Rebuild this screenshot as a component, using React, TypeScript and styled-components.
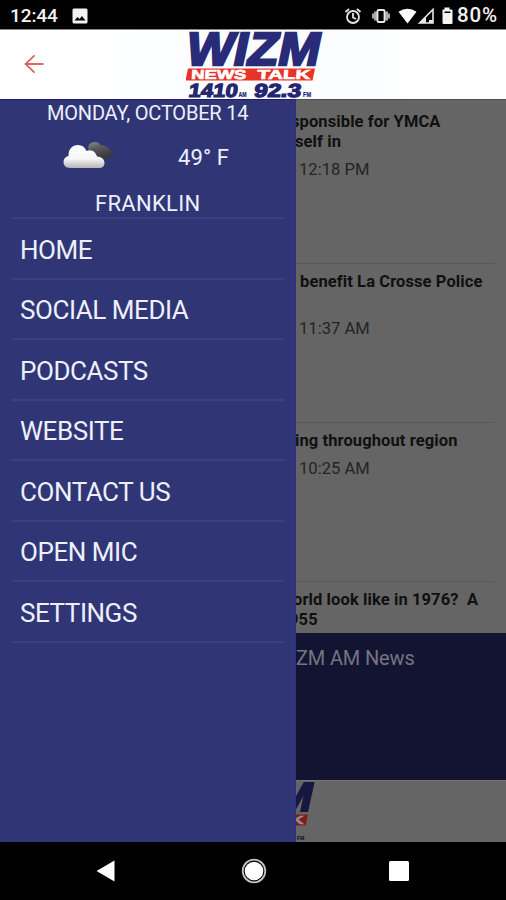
import React from "react";
import styled, { createGlobalStyle } from "styled-components";

const GlobalStyle = createGlobalStyle`
  * { box-sizing: border-box; }
  body { margin: 0; background: #000; font-family: Roboto, "Liberation Sans", sans-serif; }
`;

const Screen = styled.div`
  width: 506px;
  height: 900px;
  display: flex;
  flex-direction: column;
  overflow: hidden;
  background: #000;
`;

const StatusBar = styled.div`
  height: 29px;
  flex: none;
  display: flex;
  align-items: center;
  justify-content: space-between;
  padding: 2px 8px 0 10px;
  color: #f2f2f2;
  font-size: 19px;
  font-weight: 500;
  line-height: 27px;
`;

const StatusGroup = styled.div<{ $gap: number }>`
  display: flex;
  align-items: center;
  gap: ${(p) => p.$gap}px;
`;

const StatusText = styled.span<{ $spacing: number; $size?: number }>`
  letter-spacing: ${(p) => p.$spacing}px;
  font-size: ${(p) => p.$size ?? 19}px;
  white-space: nowrap;
`;

const StatusIcon = styled.svg`
  display: block;
  flex: none;
`;

const Header = styled.header`
  height: 70px;
  flex: none;
  display: grid;
  grid-template-columns: 186px 138px 1fr;
  background: linear-gradient(90deg, #fff 100px, #fbfdff 190px, #fbfdff 380px, #fff 410px);
  border-top: 1px solid #858585;
`;

const BackButton = styled.button`
  width: 70px;
  height: 69px;
  padding: 0 0 1px 24px;
  border: 0;
  background: none;
  display: flex;
  align-items: center;
`;

const LogoArt = styled.svg`
  display: block;
  font-family: "Liberation Sans", sans-serif;
  font-weight: 700;
`;

const Body = styled.div`
  height: 743px;
  flex: none;
  display: flex;
`;

const Drawer = styled.nav`
  width: 296px;
  flex: none;
  background: #303675;
  border-top: 1px solid #201e6a;
  border-right: 1px solid #29308a;
  color: #edf0fb;
  padding: 0 11px 0 12px;
`;

const Weather = styled.section`
  height: 119px;
  display: flex;
  flex-direction: column;
  border-bottom: 2px solid #3a4080;
  font-size: 22px;
`;

const DateLine = styled.div`
  height: 29px;
  line-height: 26px;
  padding-left: 35px;
  font-size: 20px;
  letter-spacing: -0.2px;
  white-space: nowrap;
`;

const Conditions = styled.div`
  height: 57px;
  display: flex;
  align-items: center;
`;

const CloudSlot = styled.div`
  width: 166px;
  padding: 0 0 6px 51px;
`;

const CloudArt = styled.svg`
  display: block;
`;

const Temperature = styled.span`
  letter-spacing: 0.1px;
`;

const City = styled.div`
  padding-left: 83px;
  line-height: 35px;
  height: 31px;
  letter-spacing: 0.3px;
`;

const MenuItem = styled.a`
  height: 60.5px;
  display: flex;
  align-items: center;
  padding: 2.5px 0 0 8px;
  border-bottom: 2px solid #3a4080;
  font-size: 26px;
  letter-spacing: -0.45px;
  white-space: nowrap;
`;

const Feed = styled.main`
  width: 210px;
  display: flex;
  flex-direction: column;
  overflow: hidden;
  background: #656565;
  border-top: 1px solid #4e4e4e;
`;

const Story = styled.article<{ $height: number; $top?: number }>`
  height: ${(p) => p.$height}px;
  flex: none;
  width: 199px;
  padding-top: ${(p) => p.$top ?? 8}px;
  border-bottom: 1px solid #595959;
  overflow: hidden;
`;

const Headline = styled.h2<{ $shift: number }>`
  margin: 0 0 0 ${(p) => p.$shift}px;
  font-size: 16.5px;
  line-height: 20px;
  font-weight: 700;
  letter-spacing: 0.1px;
  color: #101010;
  white-space: pre;
`;

const StoryTime = styled.div<{ $top: number }>`
  margin: ${(p) => p.$top}px 0 0 3px;
  font-size: 16.6px;
  line-height: 20px;
  color: #242424;
`;

const LastStory = styled(Story)`
  border-bottom: 0;
`;

const Station = styled.section`
  height: 147px;
  flex: none;
  background: #131431;
  color: #747582;
  font-size: 20px;
  line-height: 24px;
  letter-spacing: -0.15px;
  padding-top: 13px;
  white-space: nowrap;
`;

const Sponsor = styled.footer`
  flex: 1;
  overflow: hidden;
  border-top: 1px solid #747474;
`;

const SponsorLogo = styled.div`
  margin: -1px 0 0 -104px;
  filter: brightness(0.55);
`;

const NavBar = styled.div`
  height: 58px;
  flex: none;
  display: grid;
  grid-template-columns: 180px 146px 146px;
  padding-left: 34px;
  align-items: center;
`;

const NavButton = styled.button<{ $indent: number }>`
  height: 58px;
  border: 0;
  background: none;
  padding: 0 0 0 ${(p) => p.$indent}px;
  display: flex;
  align-items: center;
`;

function Logo({ width = 138 }: { width?: number }) {
  return (
    <LogoArt width={width} height={width / 2} viewBox="186 30 138 69">
      <text x="187" y="65" fontSize="46" fontStyle="italic" textLength="133" lengthAdjust="spacingAndGlyphs" fill="#282b78" stroke="#282b78" strokeWidth="2.4">WIZM</text>
      <path d="M188 68.500H315L312.500 80.500H185.500Z" fill="#ea3327" />
      <g fill="#fff" stroke="#fff" strokeWidth=".7">
        <text transform="translate(191 79.200) skewX(-4)" fontSize="13" textLength="55" lengthAdjust="spacingAndGlyphs">NEWS</text>
        <text transform="translate(257 79.200) skewX(-4)" fontSize="13" textLength="53" lengthAdjust="spacingAndGlyphs">TALK</text>
      </g>
      <g fill="#24266f" stroke="#24266f">
        <text transform="translate(188 96.700) skewX(-8)" fontSize="19" textLength="49" lengthAdjust="spacingAndGlyphs" strokeWidth="1.200">1410</text>
        <text x="238.500" y="96.800" fontSize="6.500" textLength="8" lengthAdjust="spacingAndGlyphs" strokeWidth=".2">AM</text>
        <text transform="translate(253.500 96.700) skewX(-8)" fontSize="19" textLength="47" lengthAdjust="spacingAndGlyphs" strokeWidth="1.200">92.3</text>
        <text x="303" y="96.800" fontSize="6.500" textLength="8" lengthAdjust="spacingAndGlyphs" strokeWidth=".2">FM</text>
      </g>
    </LogoArt>
  );
}

function CloudIcon() {
  return (
    <CloudArt width="53" height="28" viewBox="63 140 53 28">
      <defs>
        <linearGradient id="front" x1="0" y1="0" x2="0" y2="1">
          <stop offset="0" stopColor="#fff" />
          <stop offset=".6" stopColor="#f6f6f6" />
          <stop offset="1" stopColor="#b5b5b5" />
        </linearGradient>
        <linearGradient id="back" x1="0" y1="0" x2=".4" y2="1">
          <stop offset="0" stopColor="#8b8b8d" />
          <stop offset=".45" stopColor="#58585b" />
          <stop offset="1" stopColor="#38383b" />
        </linearGradient>
      </defs>
      <path d="M88 148C88 143 91 141 95 141C98 141 99.500 142.500 101 144.500C106 144 109 147 110 150C112 151 114 153 114.500 154C112 156.500 109 157.500 103 157.500L91 153Z" fill="url(#back)" />
      <path d="M70 167C65.500 167 63.500 164 63.500 161C63.500 158 65.500 155.500 68.500 155C68.500 148 72 144 78 144C82 144 85 146 86.500 150C91 147.500 96 151 97 155.500C102 156 104.500 158.500 104.500 162C104.500 165 102.500 167 99 167Z" fill="url(#front)" />
    </CloudArt>
  );
}

const menu = ["HOME", "SOCIAL MEDIA", "PODCASTS", "WEBSITE", "CONTACT US", "OPEN MIC", "SETTINGS"];

export default function App() {
  return (
    <>
      <GlobalStyle />
      <Screen>
        <StatusBar>
          <StatusGroup $gap={14}>
            <StatusText $spacing={-0.1}>12:44</StatusText>
            <StatusIcon width="16" height="16" viewBox="0 0 16 16">
              <path fillRule="evenodd" d="M2 .5H14Q15.500 .5 15.500 2V14Q15.500 15.500 14 15.500H2Q.5 15.500 .5 14V2Q.5 .5 2 .5ZM2.500 12.500H13.500L10 8L7.500 11L5.500 9Z" fill="#f2f2f2" />
            </StatusIcon>
          </StatusGroup>
          <StatusGroup $gap={2}>
            <StatusIcon width="113" height="20" viewBox="341 5 113 20">
              <g fill="none" stroke="#e5e5e5" strokeWidth="1.800">
                <circle cx="352" cy="16" r="6" />
                <path d="M344.500 11L348 8M356 8L359.500 11M352 12V16.500L355 18" />
              </g>
              <path d="M373 10.500H376V19.500H373ZM384 10.500H387V19.500H384ZM371 12.500H373V17.500H371ZM387 12.500H389V17.500H387Z" fill="#a8a8a8" />
              <rect x="376.500" y="9" width="7" height="12" rx="1" fill="none" stroke="#e5e5e5" strokeWidth="1.800" />
              <path d="M397.500 10.800Q406.500 4.500 415.500 10.800L406.500 22.500Z" fill="#fff" />
              <path d="M418.500 22L432 8.500V22Z" fill="none" stroke="#e5e5e5" strokeWidth="1.600" />
              <path d="M425 15.500V22H418.500ZM428 19H432V22H428Z" fill="#e5e5e5" />
              <path fillRule="evenodd" d="M441.500 8.500H443.500V6.500H448.500V8.500H450.500Q451.500 8.500 451.500 9.500V22Q451.500 23 450.500 23H442.500Q441.500 23 441.500 22ZM443.500 10.500V12H449.500V10.500Z" fill="#f5f5f5" />
            </StatusIcon>
            <StatusText $spacing={0.9} $size={20.5}>80%</StatusText>
          </StatusGroup>
        </StatusBar>

        <Header>
          <BackButton aria-label="Back">
            <svg width="20" height="20" viewBox="0 0 20 20" fill="none" stroke="#df655f" strokeWidth="1.800">
              <path d="M19.500 10H1.500M10.500 1.300L1.500 10L10.500 18.700" />
            </svg>
          </BackButton>
          <Logo />
        </Header>

        <Body>
          <Drawer>
            <Weather>
              <DateLine>MONDAY, OCTOBER 14</DateLine>
              <Conditions>
                <CloudSlot><CloudIcon /></CloudSlot>
                <Temperature>49° F</Temperature>
              </Conditions>
              <City>FRANKLIN</City>
            </Weather>
            {menu.map((label) => (
              <MenuItem key={label}>{label}</MenuItem>
            ))}
          </Drawer>

          <Feed>
            <Story $height={164} $top={12}>
              <Headline $shift={-5}>{"sponsible for YMCA"}</Headline>
              <Headline $shift={-1}>{"self in"}</Headline>
              <StoryTime $top={8}>12:18 PM</StoryTime>
            </Story>
            <Story $height={159}>
              <Headline $shift={4}>{"benefit La Crosse Police\n "}</Headline>
              <StoryTime $top={7}>11:37 AM</StoryTime>
            </Story>
            <Story $height={159}>
              <Headline $shift={-1}>ing throughout region</Headline>
              <StoryTime $top={8}>10:25 AM</StoryTime>
            </Story>
            <LastStory $height={51}>
              <Headline $shift={-3}>{"orld look like in 1976?  A"}</Headline>
              <Headline $shift={-7}>955</Headline>
            </LastStory>
            <Station>ZM AM News</Station>
            <Sponsor><SponsorLogo><Logo width={124} /></SponsorLogo></Sponsor>
          </Feed>
        </Body>

        <NavBar>
          <NavButton $indent={62} aria-label="Navigate back">
            <svg width="20" height="22" viewBox="0 0 20 22"><path d="M18.500 .5V21.500L.5 11Z" fill="#fff" /></svg>
          </NavButton>
          <NavButton $indent={27} aria-label="Home screen">
            <svg width="26" height="26" viewBox="0 0 26 26">
              <circle cx="13" cy="13" r="11.300" fill="none" stroke="#c4c4c4" strokeWidth="1.800" />
              <circle cx="13" cy="13" r="9.300" fill="#fff" />
            </svg>
          </NavButton>
          <NavButton $indent={29} aria-label="Recent apps">
            <svg width="20" height="20" viewBox="0 0 20 20"><rect width="20" height="20" rx="1.500" fill="#fff" /></svg>
          </NavButton>
        </NavBar>
      </Screen>
    </>
  );
}
